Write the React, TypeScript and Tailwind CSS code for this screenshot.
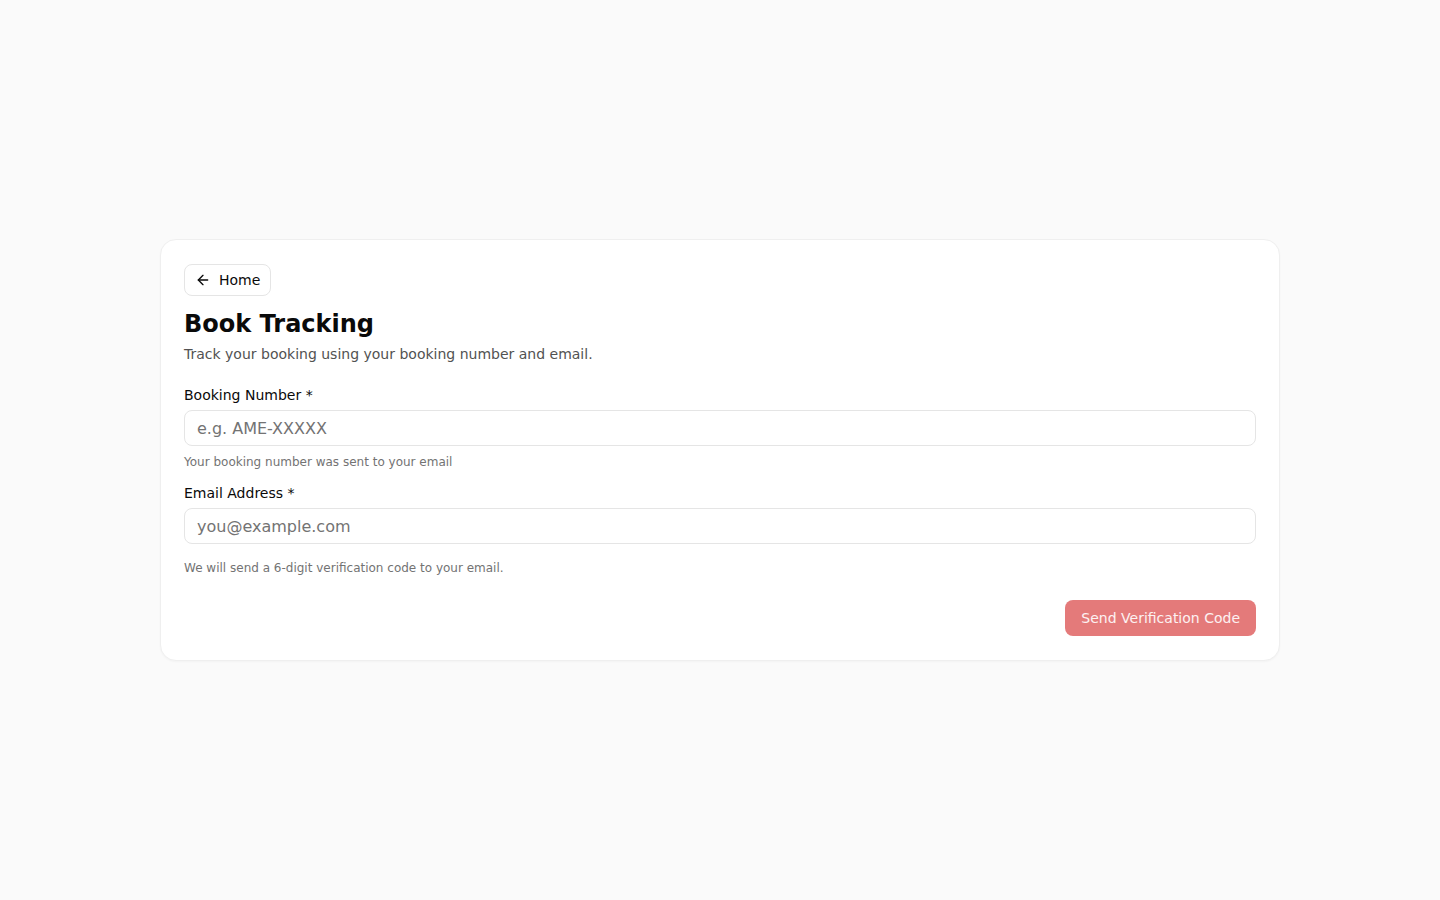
import { ArrowLeft } from 'lucide-react';

export default function App() {
  return (
    <div className="min-h-screen bg-[#fafafa] flex items-center justify-center px-40 font-['DejaVu_Sans',sans-serif] text-[#0a0a0a]">
      <div className="w-full bg-white border border-[#efefef] rounded-2xl shadow-[0_1px_2px_rgba(0,0,0,0.03)] px-[23px] py-6">
        <button className="flex items-center gap-2 h-8 px-2.5 border border-[#e5e5e5] rounded-lg text-sm bg-white">
          <ArrowLeft className="w-4 h-4" strokeWidth={2} />
          Home
        </button>

        <h1 className="mt-3 text-2xl font-bold leading-8">Book Tracking</h1>
        <p className="mt-1 text-sm leading-5 text-[#525252]">Track your booking using your booking number and email.</p>

        <div className="mt-[21px]">
          <label className="block text-sm leading-5">Booking Number *</label>
          <input
            placeholder="e.g. AME-XXXXX"
            className="mt-[5px] w-full h-9 px-3 border border-[#e5e5e5] rounded-lg text-base placeholder:text-[#737373] outline-none"
          />
          <p className="mt-2 text-xs leading-4 text-[#737373]">Your booking number was sent to your email</p>
        </div>

        <div className="mt-[13px]">
          <label className="block text-sm leading-5">Email Address *</label>
          <input
            placeholder="you@example.com"
            className="mt-[5px] w-full h-9 px-3 border border-[#e5e5e5] rounded-lg text-base placeholder:text-[#737373] outline-none"
          />
          <p className="mt-4 text-xs leading-4 text-[#737373]">We will send a 6-digit verification code to your email.</p>
        </div>

        <div className="mt-6 flex justify-end">
          <button className="h-9 px-4 rounded-lg bg-[#e47a7a] text-sm text-white/90">Send Verification Code</button>
        </div>
      </div>
    </div>
  );
}
